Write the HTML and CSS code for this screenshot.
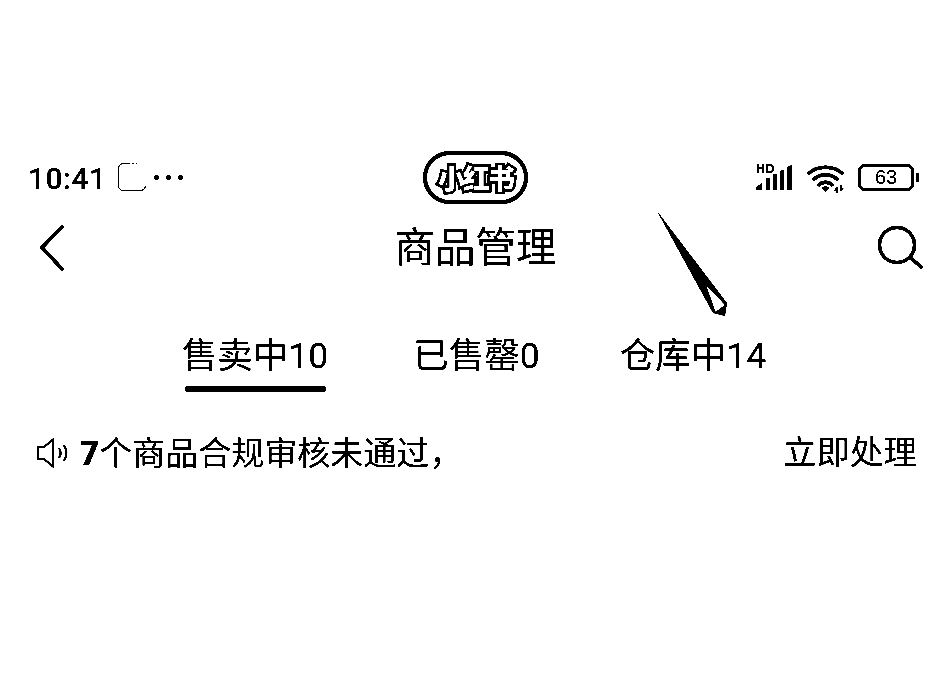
FILE: index.html
```html
<!DOCTYPE html>
<html lang="zh-CN">
<head>
<meta charset="utf-8">
<title>商品管理</title>
<link rel="stylesheet" href="styles.css">
</head>
<body>
<div class="page">
  <header class="status">
    <div class="status-left">
      <span class="time">10:41</span>
      <svg class="app-icon" width="30" height="30" viewBox="0 0 30 30"><path d="M13 1.500H7C3.500 1.500 1.500 3.500 1.500 7V23C1.500 27 3.500 28.500 7 28.500H23C26 28.500 28 27 28.500 24" fill="none" stroke="#000" stroke-width="1"/><path d="M15 1.500H20" stroke="#000" stroke-width="1" stroke-dasharray="2 2"/></svg>
      <span class="dots"><i></i><i></i><i></i></span>
    </div>
    <div class="logo"><span class="logo-text">小红书</span></div>
    <div class="status-right">
      <svg width="38" height="28" viewBox="0 0 38 28"><text x="1" y="10" class="hd">HD</text><path d="M1 27V24L7 20V27ZM11 27V15H15V27ZM18 27V11H22V27ZM25 27V9L27 7H29V27ZM32 27V4L37 2V27Z" fill="#000"/></svg>
      <svg width="37" height="32" viewBox="3 0 37 32"><g fill="none" stroke="#000" stroke-width="3.500"><path d="M4 13C13 4 30 4 39 13"/><path d="M9 19C16 12 27 12 34 19"/><path d="M14 25C18 20 25 20 29 25"/></g><path d="M17.500 27L21.500 25L25.500 27L21.500 31Z" fill="#000"/><path d="M33 26V32M37 24V30M31 30L33 26M39 27L37 30" stroke="#000" stroke-width="1.500" fill="none"/></svg>
      <div class="battery"><span class="battery-body">63</span><i class="battery-tip"></i></div>
    </div>
  </header>

  <nav class="nav">
    <svg class="nav-back" width="26" height="48" viewBox="0 0 26 48"><path d="M23 2L2 23.500L23 46" fill="none" stroke="#000" stroke-width="3.500"/></svg>
    <h1 class="title">商品管理</h1>
    <svg class="nav-search" width="46" height="44" viewBox="0 0 46 44"><circle cx="19" cy="19" r="17.500" fill="none" stroke="#000" stroke-width="3.500"/><path d="M32 31L44 42" stroke="#000" stroke-width="3.500"/></svg>
  </nav>

  <div class="tabs">
    <div class="tab tab-active">售卖中10</div>
    <div class="tab">已售罄0</div>
    <div class="tab">仓库中14</div>
  </div>

  <div class="notice">
    <div class="notice-left">
      <svg width="34" height="30" viewBox="0 0 34 30"><path d="M2 9H8L17 1.500V28.500L8 21H2Z" fill="none" stroke="#000" stroke-width="2"/><path d="M23 10C25 13 25 17 23 20M28 7C31 12 31 18 28 23" fill="none" stroke="#000" stroke-width="2"/></svg>
      <p class="notice-text"><b>7</b>个商品合规审核未通过，</p>
    </div>
    <span class="notice-action">立即处理</span>
  </div>

  <svg class="arrow" width="80" height="112" viewBox="0 0 80 112"><path d="M1 2L71 94L69 107L57 104Z" fill="#000"/><path d="M50 76L59.500 103L69 96Z" fill="#fff"/></svg>
</div>
</body>
</html>
```

FILE: styles.css
```css
* { box-sizing: border-box; }
html, body { margin: 0; padding: 0; background: #fff; }
body {
  color: #000;
  font-family: Roboto, "Noto Sans CJK SC", "Noto Sans", sans-serif;
  overflow: hidden;
}
.page {
  position: relative;
  width: 951px;
  height: 675px;
  padding-top: 148px;
  filter: grayscale(1) brightness(0.8) contrast(12);
  background: #fff;
}
.status {
  display: grid;
  grid-template-columns: 1fr auto 1fr;
  align-items: center;
  height: 58px;
}
.status-left { display: flex; align-items: center; gap: 10px; padding-left: 28px; }
.time { padding-top: 3px; font-size: 30px; font-weight: 500; line-height: 1; letter-spacing: 0.5px; }
.dots { display: flex; gap: 7px; margin-left: -3px; }
.dots i { width: 5px; height: 5px; border-radius: 50%; background: #000; }
.logo {
  display: flex;
  align-items: center;
  justify-content: center;
  width: 105px;
  height: 53px;
  border: 4px solid #000;
  border-radius: 27px;
  background: #fff;
}
.logo-text {
  font-family: "Noto Sans CJK SC", sans-serif;
  font-size: 27px;
  font-weight: 900;
  line-height: 1;
  letter-spacing: -2px;
  color: #fff;
  -webkit-text-stroke: 5px #000;
  paint-order: stroke fill;
}
.status-right { display: flex; align-items: center; justify-content: flex-end; gap: 14px; padding-right: 32px; }
.hd { font: 700 12px "Liberation Sans", sans-serif; letter-spacing: 1px; }
.battery { display: flex; align-items: center; gap: 2px; }
.battery-body {
  display: flex;
  align-items: center;
  justify-content: center;
  width: 56px;
  height: 27px;
  border: 3px solid #000;
  border-radius: 7px;
  font: 400 20px "Liberation Sans", sans-serif;
}
.battery-tip { width: 3px; height: 9px; background: #000; }
.nav {
  display: grid;
  grid-template-columns: 1fr auto 1fr;
  align-items: center;
  height: 68px;
  padding: 0 27px;
  margin-top: 8px;
}
.nav-back { margin-left: 13px; }
.nav-search { justify-self: end; }
.title { margin: 0; font-size: 40.5px; font-weight: 400; line-height: 1; }
.tabs {
  display: flex;
  justify-content: center;
  gap: 80px;
  margin-top: 46px;
  padding-right: 3px;
}
.tab {
  position: relative;
  height: 70px;
  font-size: 35.5px;
  line-height: 56px;
}
.tab-active { margin-right: 5px; }
.tab-active::after {
  content: "";
  position: absolute;
  left: 3px;
  right: 2px;
  bottom: 6px;
  height: 6px;
  border-radius: 3px;
  background: #000;
}
.notice {
  display: flex;
  align-items: center;
  justify-content: space-between;
  height: 50px;
  margin-top: 29px;
  padding: 2px 34px 0 36px;
}
.notice-left { display: flex; align-items: center; gap: 10px; }
.notice-text { margin: 0; font-size: 33px; line-height: 1; }
.notice-text b { font-weight: 900; }
.notice-action { font-size: 33.5px; line-height: 1; }
.arrow { position: absolute; left: 656px; top: 209px; }
```
